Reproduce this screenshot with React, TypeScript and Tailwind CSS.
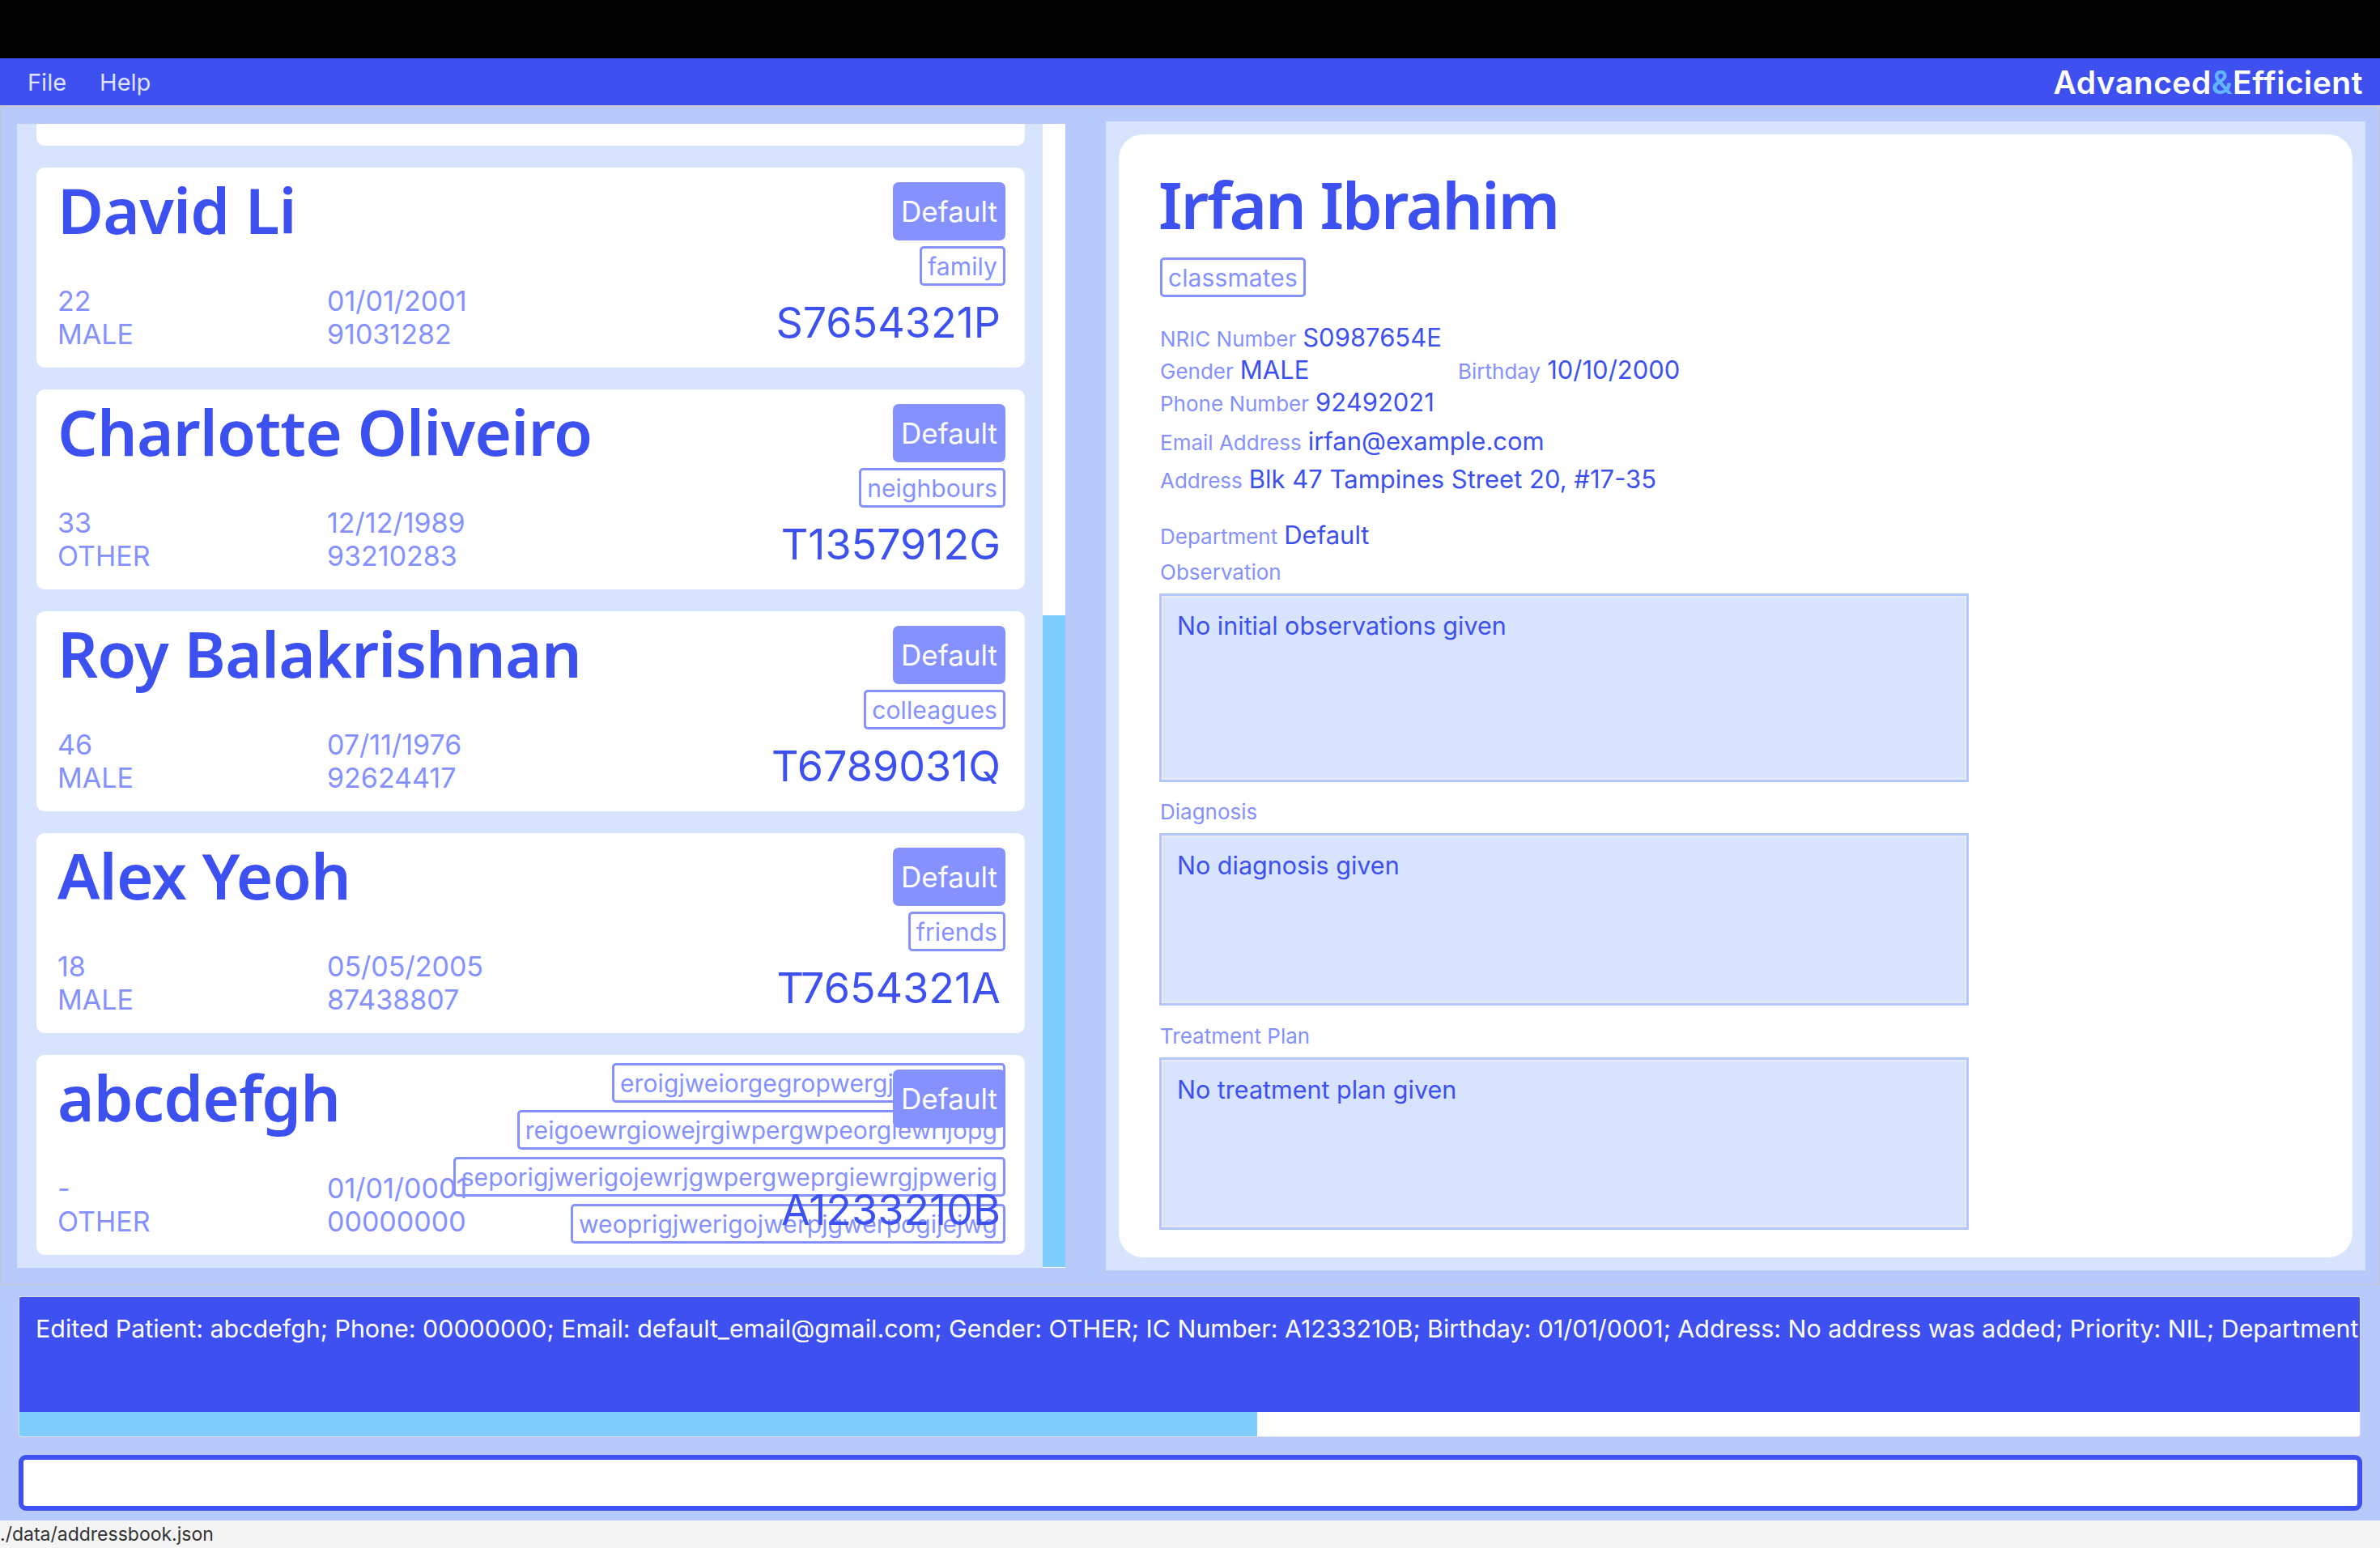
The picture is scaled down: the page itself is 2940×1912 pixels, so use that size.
import React from 'react';

type Patient = {
    name: string;
    tags: string[];
    age: string;
    gender: string;
    dob: string;
    phone: string;
    nric: string;
};

const patients: Patient[] = [
    { name: 'Bernice Yu', tags: ['colleagues'], age: '30', gender: 'FEMALE', dob: '02/02/1993', phone: '99272758', nric: 'S1234567D' },
    { name: 'David Li', tags: ['family'], age: '22', gender: 'MALE', dob: '01/01/2001', phone: '91031282', nric: 'S7654321P' },
    { name: 'Charlotte Oliveiro', tags: ['neighbours'], age: '33', gender: 'OTHER', dob: '12/12/1989', phone: '93210283', nric: 'T1357912G' },
    { name: 'Roy Balakrishnan', tags: ['colleagues'], age: '46', gender: 'MALE', dob: '07/11/1976', phone: '92624417', nric: 'T6789031Q' },
    { name: 'Alex Yeoh', tags: ['friends'], age: '18', gender: 'MALE', dob: '05/05/2005', phone: '87438807', nric: 'T7654321A' },
    {
        name: 'abcdefgh',
        tags: [
            'eroigjweiorgegropwergjpowejgw',
            'reigoewrgiowejrgiwpergwpeorgiewrijopg',
            'seporigjwerigojewrjgwpergweprgiewrgjpwerig',
            'weoprigjwerigojwerpjgwerpogijejwg',
        ],
        age: '-', gender: 'OTHER', dob: '01/01/0001', phone: '00000000', nric: 'A1233210B',
    },
];

const Tag: React.FC<{ label: string }> = ({ label }) => (
    <span className="inline-flex h-[49px] items-center whitespace-nowrap rounded-[5px] border-[3px] border-[#8491ff] px-[7px] text-[30px] leading-none tracking-[0.1px] text-[#8491ff]">
        {label}
    </span>
);

const PatientCard: React.FC<{ p: Patient; first?: boolean }> = ({ p, first }) => (
    <div className={`grid h-[247px] shrink-0 grid-cols-1 grid-rows-1 rounded-[10px] bg-white ${first ? '-mt-[220px]' : ''}`}>
        {/* name + personal details */}
        <div className="col-start-1 row-start-1 flex flex-col pl-[26px] pt-[13px]">
            <div className="whitespace-nowrap font-['Noto_Sans',sans-serif] text-[78px] font-semibold leading-none tracking-[-0.8px] text-[#3d50f0]">{p.name}</div>
            <div className="mt-[53px] grid grid-cols-[333px_auto] text-[34px] leading-[41px] text-[#8491ff]">
                <span>{p.age}</span>
                <span>{p.dob}</span>
                <span>{p.gender}</span>
                <span>{p.phone}</span>
            </div>
        </div>
        {/* tags, centred on the right */}
        <div className="col-start-1 row-start-1 mb-[4px] mr-[24px] flex flex-col items-end gap-[9px] self-center justify-self-end">
            {p.tags.map(t => <Tag key={t} label={t} />)}
        </div>
        <div className="col-start-1 row-start-1 mr-[24px] mt-[18px] flex h-[72px] w-[139px] items-center justify-center self-start justify-self-end rounded-[7px] bg-[#8491ff] text-[35px] leading-none text-white">
            Default
        </div>
        <div className="col-start-1 row-start-1 mb-[29px] mr-[30px] self-end justify-self-end text-[52px] leading-none text-[#3d50f0]">{p.nric}</div>
    </div>
);

const Row: React.FC<{ label: string; value: string; className?: string }> = ({ label, value, className = '' }) => (
    <div className={`flex items-baseline leading-none ${className}`}>
        <span className="text-[26px] text-[#8491ff]">{label}</span>
        <span className="ml-[8px] text-[31px] text-[#3d50f0]">{value}</span>
    </div>
);

const NoteBox: React.FC<{ text: string; h: string }> = ({ text, h }) => (
    <div className={`w-[1000px] border-[3px] border-[#b4c7fb] ${h}`}>
        <div className="h-full rounded-[3px] border-2 border-[#e6e9f1] bg-[#d8e3fe] pl-[17px] pt-[20px] text-[30.5px] leading-none text-[#3d50f0]">
            {text}
        </div>
    </div>
);

export default function App() {
    return (
        <div className="flex h-[1912px] w-[2940px] flex-col overflow-hidden bg-black font-['Inter',sans-serif]">
            <div className="h-[72px] shrink-0 bg-black" />

            {/* Menu bar */}
            <div className="flex h-[60px] shrink-0 items-center border-b-2 border-[#c9cbd6] bg-[#3e50f0] pl-[34px] pr-[21px]">
                <span className="text-[29px] leading-none text-[#dfe2ff]">File</span>
                <span className="ml-[41px] text-[29px] leading-none text-[#dfe2ff]">Help</span>
                <span className="ml-auto text-[39px] font-semibold leading-none tracking-[0.5px] text-white">
                    Advanced<span className="text-[#62b6ff]">&amp;</span>Efficient
                </span>
            </div>

            {/* Split pane */}
            <div className="flex h-[1455px] shrink-0 items-start border-x border-b border-[#c6c6c6] bg-[#b8cafc]">
                <div className="ml-[20px] mt-[21px] flex h-[1413px] w-[1295px] bg-[#d8e3fe]">
                    <div className="flex-1 overflow-hidden pl-[24px] pr-[22px]">
                        <div className="flex flex-col gap-[27px]">
                            {patients.map((p, i) => <PatientCard key={p.name} p={p} first={i === 0} />)}
                        </div>
                    </div>
                    <div className="flex w-[28px] flex-col bg-white">
                        <div className="mt-[607px] h-[805px] bg-[#7fcdfe]" />
                    </div>
                </div>

                <div className="ml-[50px] mt-[18px] h-[1419px] w-[1556px] bg-[#d8e3fe] p-[16px]">
                    <div className="flex h-full flex-col items-start rounded-[30px] bg-white pl-[49px] pt-[46px]">
                        <div className="font-['Noto_Sans',sans-serif] text-[80px] font-semibold leading-none tracking-[-2.2px] text-[#3d50f0]">Irfan Ibrahim</div>
                        <div className="ml-[2px] mt-[26px]"><Tag label="classmates" /></div>
                        <div className="ml-[2px] flex flex-col items-start">
                            <Row className="mt-[34px]" label="NRIC Number" value="S0987654E" />
                            <div className="mt-[9px] flex">
                                <Row className="w-[368px]" label="Gender" value="MALE" />
                                <Row label="Birthday" value="10/10/2000" />
                            </div>
                            <Row className="mt-[9px]" label="Phone Number" value="92492021" />
                            <Row className="mt-[17px]" label="Email Address" value="irfan@example.com" />
                            <Row className="mt-[16px]" label="Address" value="Blk 47 Tampines Street 20, #17-35" />
                            <Row className="mt-[38px]" label="Department" value="Default" />

                            <div className="mt-[18px] text-[26px] leading-none text-[#8491ff]">Observation</div>
                            <div className="-ml-[1px] mt-[13px]"><NoteBox text="No initial observations given" h="h-[233px]" /></div>
                            <div className="mt-[24px] text-[26px] leading-none text-[#8491ff]">Diagnosis</div>
                            <div className="-ml-[1px] mt-[13px]"><NoteBox text="No diagnosis given" h="h-[213px]" /></div>
                            <div className="mt-[25px] text-[26px] leading-none text-[#8491ff]">Treatment Plan</div>
                            <div className="-ml-[1px] mt-[13px]"><NoteBox text="No treatment plan given" h="h-[213px]" /></div>
                        </div>
                    </div>
                </div>
            </div>

            {/* Result display + command box */}
            <div className="flex h-[291px] shrink-0 flex-col bg-[#b8cafc] pl-[23px]">
                <div className="mr-[24px] mt-[14px] overflow-hidden rounded-[3px] border border-[#dcdcdc]">
                    <div className="h-[142px] overflow-hidden whitespace-nowrap bg-[#3e50f0] pl-[20px] pt-[24px] text-[30.4px] leading-none text-white">
                        Edited Patient: abcdefgh; Phone: 00000000; Email: default_email@gmail.com; Gender: OTHER; IC Number: A1233210B; Birthday: 01/01/0001; Address: No address was added; Priority: NIL; Department: Default
                    </div>
                    <div className="h-[30px] bg-white">
                        <div className="h-full w-[1529px] bg-[#7fcdfe]" />
                    </div>
                </div>
                <div className="mr-[22px] mt-[22px] h-[69px] rounded-[9px] border-[6px] border-[#3e50f0] bg-white" />
            </div>

            {/* Status bar */}
            <div className="flex h-[34px] shrink-0 items-center bg-[#f4f4f4] text-[23px] leading-none text-[#333333]">
                ./data/addressbook.json
            </div>
        </div>
    );
}
